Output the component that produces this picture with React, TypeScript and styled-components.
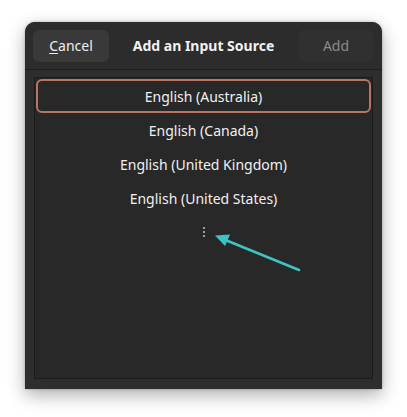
import styled, { createGlobalStyle } from "styled-components";

const sources = [
  "English (Australia)",
  "English (Canada)",
  "English (United Kingdom)",
  "English (United States)",
];

export default function App(): JSX.Element {
  return (
    <>
      <GlobalStyle />
      <Page>
        <Window>
          <HeaderBar>
            <HeaderButton>
              <u>C</u>ancel
            </HeaderButton>
            <Title>Add an Input Source</Title>
            <HeaderButton disabled>Add</HeaderButton>
          </HeaderBar>
          <Content>
            <ListFrame>
              {sources.map((name, i) => (
                <Row key={name} selected={i === 0}>
                  {name}
                </Row>
              ))}
              <MoreRow>
                <Dots>
                  <Dot />
                  <Dot />
                  <Dot />
                </Dots>
              </MoreRow>
            </ListFrame>
          </Content>
        </Window>
        <Arrow viewBox="0 0 100 50" width="100" height="50">
          <line x1="86" y1="37" x2="10" y2="6" stroke="#3dc4c2" strokeWidth="2.6" strokeLinecap="round" />
          <polygon points="2,2.5 17,1.5 12,13" fill="#3dc4c2" />
        </Arrow>
      </Page>
    </>
  );
}

const GlobalStyle = createGlobalStyle`
  body {
    margin: 0;
    background: #ffffff;
    font-family: "Noto Sans", "DejaVu Sans", sans-serif;
  }
`;

const Page = styled.div`
  position: relative;
  width: 407px;
  height: 417px;
  padding: 22px 25px 28px;
  box-sizing: border-box;
  background: #ffffff;
`;

const Window = styled.div`
  display: flex;
  flex-direction: column;
  height: 100%;
  background: #2e2e2e;
  border-radius: 10px 10px 0 0;
  box-shadow: 0 6px 18px rgba(0, 0, 0, 0.32), 0 0 3px rgba(0, 0, 0, 0.25);
  overflow: hidden;
`;

const HeaderBar = styled.div`
  display: flex;
  align-items: center;
  justify-content: space-between;
  height: 47px;
  padding: 0 8px;
  background: #2c2c2c;
  border-bottom: 1px solid #1f1f1f;
  flex-shrink: 0;
`;

const HeaderButton = styled.button`
  width: 76px;
  height: 32px;
  border: none;
  border-radius: 6px;
  background: ${(p) => (p.disabled ? "#303030" : "#393939")};
  color: ${(p) => (p.disabled ? "#8a8a8a" : "#eeeeee")};
  font-family: "Noto Sans", "DejaVu Sans", sans-serif;
  font-size: 14px;
  padding: 0;

  u {
    text-decoration-thickness: 1px;
    text-underline-offset: 2px;
  }
`;

const Title = styled.div`
  color: #f2f2f2;
  font-size: 14px;
  font-weight: 700;
`;

const Content = styled.div`
  flex: 1;
  display: flex;
  padding: 7px 9px 10px;
`;

const ListFrame = styled.div`
  flex: 1;
  display: flex;
  flex-direction: column;
  padding: 1px;
  background: #282828;
  border: 1px solid #1a1a1a;
`;

const Row = styled.div<{ selected?: boolean }>`
  display: flex;
  align-items: center;
  justify-content: center;
  height: 34px;
  box-sizing: border-box;
  border: 2px solid ${(p) => (p.selected ? "#b87660" : "transparent")};
  border-radius: 6px;
  color: #f0f0f0;
  font-size: 14px;
`;

const MoreRow = styled.div`
  display: flex;
  justify-content: center;
  padding-top: 12px;
`;

const Dots = styled.div`
  display: flex;
  flex-direction: column;
  gap: 2px;
`;

const Dot = styled.span`
  width: 2px;
  height: 2px;
  background: #9a9a9a;
`;

const Arrow = styled.svg`
  position: absolute;
  left: 213px;
  top: 233px;
`;
